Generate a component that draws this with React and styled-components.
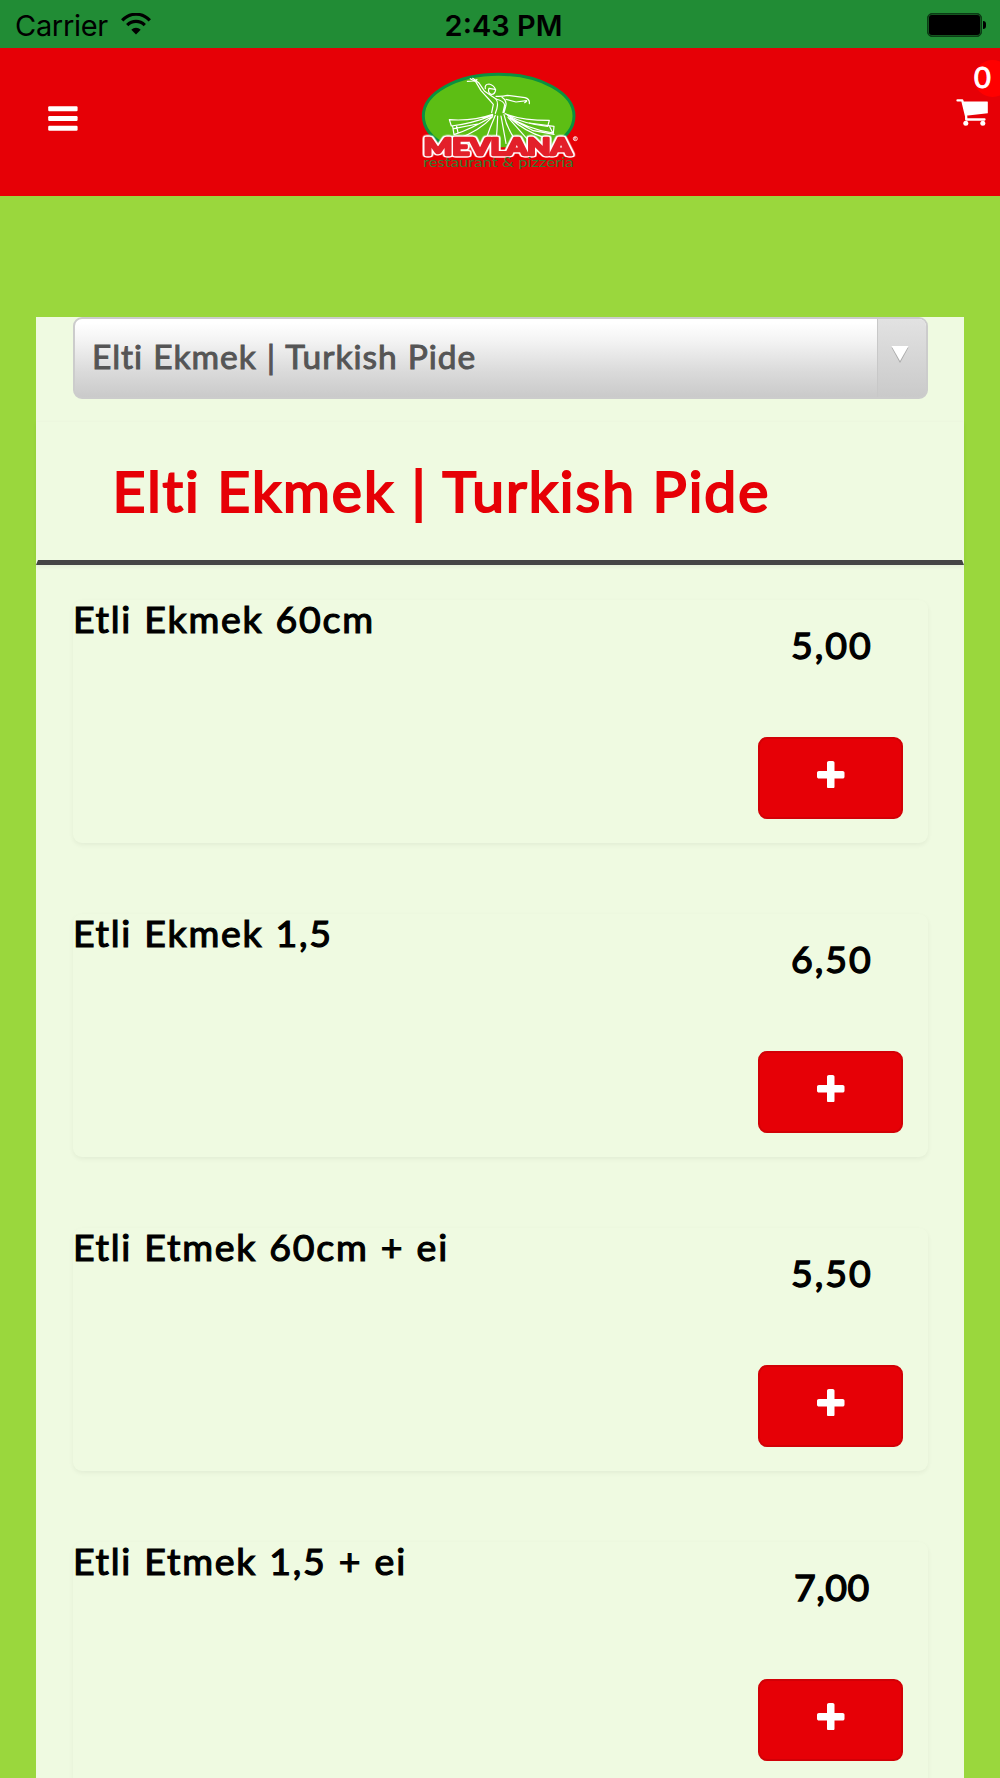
import React from 'react';
import styled, { createGlobalStyle } from 'styled-components';

const products = [
	{ id: 1, name: 'Etli Ekmek 60cm', price: '5,00' },
	{ id: 2, name: 'Etli Ekmek 1,5', price: '6,50' },
	{ id: 3, name: 'Etli Etmek 60cm + ei', price: '5,50' },
	{ id: 4, name: 'Etli Etmek 1,5 + ei', price: '7,00' },
];

const WifiIcon = () => (
	<svg width="30" height="22" viewBox="0 0 30 22" fill="none" stroke="#000">
		<path d="M1.2 7.3C9 -.8 21 -.8 28.8 7.3" strokeWidth="3.2" />
		<path d="M6.2 12.2C11.3 7.2 18.7 7.2 23.8 12.2" strokeWidth="3.2" />
		<path d="M15 21.5 10.3 16.8C12.8 14 17.2 14 19.7 16.8Z" fill="#000" stroke="none" />
	</svg>
);

const BarsIcon = () => (
	<svg width="30" height="25" viewBox="0 0 30 25" fill="#fff">
		<rect x="0.2" y="0.2" width="29.4" height="5" rx="1.2" />
		<rect x="0.2" y="10" width="29.4" height="5" rx="1.2" />
		<rect x="0.2" y="19.7" width="29.4" height="5" rx="1.2" />
	</svg>
);

const CartIcon = () => (
	<svg width="32" height="28" viewBox="0 0 32 28" fill="#fff">
		<path
			d="M1.5 1.4H6.3L10.2 17.5V20.5H28.5"
			fill="none"
			stroke="#fff"
			strokeWidth="2.3"
			strokeLinecap="round"
			strokeLinejoin="round"
		/>
		<path d="M7 2.4H31.3Q31.8 2.4 31.8 3V14.3L9.8 16.8Z" />
		<circle cx="9.8" cy="24.3" r="2.5" />
		<circle cx="26.8" cy="24.3" r="2.5" />
	</svg>
);

const PlusIcon = () => (
	<svg width="27.5" height="27.5" viewBox="192 128 1408 1408" fill="#fff">
		<path d="M1600 736v192q0 40-28 68t-68 28h-416v416q0 40-28 68t-68 28h-192q-40 0-68-28t-28-68v-416h-416q-40 0-68-28t-28-68v-192q0-40 28-68t68-28h416v-416q0-40 28-68t68-28h192q40 0 68 28t28 68v416h416q40 0 68 28t28 68z" />
	</svg>
);

const Logo = () => (
	<svg width="180" height="120" viewBox="0 0 540 360">
		<clipPath id="logo-clip">
			<rect x="0" y="0" width="540" height="262" />
		</clipPath>
		<g clipPath="url(#logo-clip)">
			<ellipse cx="266" cy="168" rx="226" ry="125" fill="#5dbe14" stroke="#0a9140" strokeWidth="9" />
		</g>
		<g fill="none" stroke="#fff" strokeWidth="3.6" strokeLinecap="round" strokeLinejoin="round">
			<path d="M172 64 190 63 201 59M188 55 206 68 224 94 258 117Q268 130 256 160" />
			<path d="M181 56 197 65 213 92 236 117 250 133 245 158" />
			<path d="M226 86Q223 73 237 72Q251 75 257 89Q255 104 243 103Q232 98 237 85L255 88" />
			<path d="M258 109Q278 110 292 106L345 113Q360 117 358 131M350 124 344 128M288 118 318 126 350 122" />
			<path d="M258 117Q282 123 284 135L279 158M276 112Q292 122 287 140L282 158" />
			<path d="M248 163Q188 184 118 179L124 198Q184 191 248 166" />
			<path d="M128 199 132 224Q181 208 244 171M140 199 144 218M132 206 202 192M144 236Q208 213 248 170" />
			<path d="M256 166Q240 202 226 244M263 168Q262 205 258 246M273 168 288 250M282 164Q290 205 318 242" />
			<path d="M285 161Q335 181 418 181L413 199Q342 192 292 165" />
			<path d="M294 167Q350 207 430 219L432 199 358 189M300 174Q345 215 402 232M294 172Q325 207 350 235M430 222 418 198M308 179 370 212 432 223" />
		</g>
		<LogoName x="41" y="285" textLength="444" lengthAdjust="spacingAndGlyphs">
			MEVLANA
		</LogoName>
		<circle cx="496" cy="236" r="6" fill="none" stroke="#fff" strokeWidth="2.5" />
		<LogoMark x="493" y="239">R</LogoMark>
		<LogoTagline x="39" y="322" textLength="452" lengthAdjust="spacingAndGlyphs">
			restaurant &amp; pizzeria
		</LogoTagline>
	</svg>
);

const Product = ({ product }) => {
	const { name, price } = product;

	return (
		<ProductCard>
			<ProductName>{name}</ProductName>
			<OrderSection>
				<Price $tight={price.startsWith('7,')}>{price}</Price>
				<AddButton aria-label="add">
					<PlusIcon />
				</AddButton>
			</OrderSection>
		</ProductCard>
	);
};

const App = () => {
	return (
		<Page>
			<GlobalStyle />
			<StatusBar>
				<div className="carrier">
					<span>Carrier</span>
					<WifiIcon />
				</div>
				<div className="time">2:43 PM</div>
				<div className="power">
					<Battery />
				</div>
			</StatusBar>
			<Header>
				<MenuButton aria-label="menu">
					<BarsIcon />
				</MenuButton>
				<Logo />
				<CartSection>
					<CartCount>0</CartCount>
					<CartIcon />
				</CartSection>
			</Header>
			<Content>
				<SelectBox>
					<span className="label">Elti Ekmek | Turkish Pide</span>
					<span className="arrow">
						<svg width="18" height="19" viewBox="0 0 18 19">
							<path d="M.5 2.5H17.5L9 18Z" fill="#aaa" />
							<path d="M.5 1H17.5L9 16Z" fill="#fff" />
						</svg>
					</span>
				</SelectBox>
				<Category>
					<CategoryTitle>Elti Ekmek | Turkish Pide</CategoryTitle>
				</Category>
				<ProductList>
					{products.map((product) => (
						<Product key={product.id} product={product} />
					))}
				</ProductList>
			</Content>
		</Page>
	);
};

const GlobalStyle = createGlobalStyle`
	* {
		box-sizing: border-box;
	}
	body {
		margin: 0;
		background: #9ad73d;
		overflow: hidden;
	}
	svg {
		display: block;
		flex-shrink: 0;
	}
`;

const Page = styled.div`
	width: 1000px;
	height: 1778px;
	overflow: hidden;
	background: #9ad73d;
	font-family: Lato, 'Open Sans', sans-serif;
	color: #000;
`;

const StatusBar = styled.div`
	display: grid;
	grid-template-columns: 1fr auto 1fr;
	align-items: center;
	height: 48px;
	padding: 2px 14px 0 15px;
	background: #218c35;
	font-family: Inter, sans-serif;
	font-size: 29px;

	.carrier {
		display: flex;
		align-items: center;
		gap: 13px;
		letter-spacing: -0.3px;

		svg {
			margin-top: -3px;
		}
	}
	.time {
		font-weight: 600;
		margin-left: 6px;
	}
	.power {
		display: flex;
		justify-content: flex-end;
	}
`;

const Battery = styled.div`
	position: relative;
	width: 55px;
	height: 24px;
	margin: -1px 4px 0 0;
	border: 1px solid #0b3c15;
	border-radius: 5px;
	background: #000;
	box-shadow: inset 0 0 0 1px #14561f;

	&::after {
		content: '';
		position: absolute;
		left: 55px;
		top: 7px;
		width: 3px;
		height: 8px;
		border-radius: 0 4px 4px 0;
		background: #000;
	}
`;

const Header = styled.header`
	display: grid;
	grid-template-columns: 1fr 180px 1fr;
	height: 147.5px;
	padding-top: 12px;
	background: #e60006;
`;

const MenuButton = styled.button`
	align-self: start;
	justify-self: start;
	margin: 46px 0 0 48px;
	padding: 0;
	border: none;
	background: none;
`;

const CartSection = styled.div`
	display: flex;
	flex-direction: column;
	align-items: flex-end;
	overflow: hidden;

	svg {
		margin: 2px 12px 0 0;
	}
`;

const CartCount = styled.div`
	width: 37px;
	height: 37px;
	margin-right: -11px;
	border-radius: 50%;
	background: #ff0000;
	color: #fff;
	font-size: 29px;
	line-height: 33px;
	-webkit-text-stroke: 1px #fff;
`;

const LogoName = styled.text`
	font-family: Lato, sans-serif;
	font-size: 70px;
	font-weight: 900;
	fill: #e3202a;
	stroke: #e3202a;
	stroke-width: 7px;
	stroke-linejoin: round;
	filter: drop-shadow(4px 0 0 #fff) drop-shadow(-4px 0 0 #fff) drop-shadow(0 3.5px 0 #fff) drop-shadow(0 -3.5px 0 #fff);
`;

const LogoMark = styled.text`
	font-family: Lato, sans-serif;
	font-size: 9px;
	font-weight: 700;
	fill: #fff;
`;

const LogoTagline = styled.text`
	font-family: Lato, sans-serif;
	font-size: 38px;
	fill: #38792f;
`;

const Content = styled.main`
	width: 927.5px;
	height: 1500px;
	margin: 121px 0 0 36px;
	background: #effae1;
`;

const SelectBox = styled.div`
	display: flex;
	justify-content: space-between;
	width: 855px;
	height: 82px;
	margin-left: 37px;
	border: 2px solid #ccc;
	border-radius: 9px;
	background: linear-gradient(#fff 5%, #f2f2f2 30%, #dadada 68%, #cacaca);
	overflow: hidden;

	.label {
		padding-left: 17px;
		color: #555;
		font-size: 33.5px;
		line-height: 75px;
		letter-spacing: 1px;
		word-spacing: 0.5px;
		-webkit-text-stroke: 1px #555;
	}
	.arrow {
		display: flex;
		justify-content: center;
		width: 49px;
		padding: 26px 4px 0 0;
		border-left: 1px solid #c8c8c8;
		background: linear-gradient(#e2e2e2, #cacaca);
	}
`;

const Category = styled.section`
	height: 144px;
	margin-top: 22px;
	border: 2px solid #effae1;
	border-top: 1px solid #edf7df;
	border-bottom: 5px solid #444;
	box-shadow: 0 2px 4px rgba(0, 0, 0, 0.05);
`;

const CategoryTitle = styled.h1`
	margin: 0 0 0 74.5px;
	font-size: 57px;
	font-weight: 400;
	line-height: 137px;
	letter-spacing: 2px;
	color: #e60006;
	-webkit-text-stroke: 2.2px #e60006;
	white-space: nowrap;
`;

const ProductList = styled.div`
	display: flex;
	flex-direction: column;
	gap: 71px;
	padding: 35px 36px 0 37px;
`;

const ProductCard = styled.article`
	display: flex;
	justify-content: space-between;
	height: 243px;
	border-radius: 9px;
	box-shadow: 0 2px 5px rgba(0, 0, 0, 0.055);
`;

const ProductName = styled.h2`
	margin: 0;
	font-size: 37.5px;
	font-weight: 400;
	line-height: 38px;
	letter-spacing: 1.75px;
	word-spacing: 0.9px;
	-webkit-text-stroke: 1.2px #000;
	white-space: nowrap;
`;

const OrderSection = styled.div`
	display: flex;
	flex-direction: column;
	align-items: center;
	width: 145px;
	margin-right: 24.5px;
`;

const Price = styled.div`
	height: 137px;
	padding: 25px 0 0 3px;
	font-size: 37.5px;
	line-height: 40px;
	letter-spacing: ${({ $tight }) => ($tight ? '0.5px' : '2px')};
	-webkit-text-stroke: 1.4px #000;
`;

const AddButton = styled.button`
	display: flex;
	justify-content: center;
	width: 145px;
	height: 82px;
	padding: 22px 0 0 1px;
	border: 2px solid #d20006;
	border-radius: 9px;
	background: #e60006;
`;

export default App;
